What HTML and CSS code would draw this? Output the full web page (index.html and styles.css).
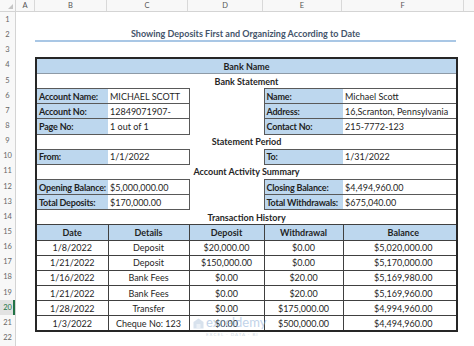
FILE: index.html
```html
<!DOCTYPE html>
<html lang="en">
<head>
    <meta charset="UTF-8">
    <meta name="viewport" content="width=device-width, initial-scale=1.0">
    <title>Showing Deposits First and Organizing According to Date</title>
    <link rel="stylesheet" href="styles.css">
</head>
<body>
    <div class="sheet">
        <div class="colbar">
            <div class="corner"><span class="tri"></span></div>
            <div class="colhead col-a">A</div>
            <div class="colhead col-b">B</div>
            <div class="colhead col-c">C</div>
            <div class="colhead col-d">D</div>
            <div class="colhead col-e">E</div>
            <div class="colhead col-f">F</div>
            <div class="colhead col-g"></div>
        </div>

        <div class="body">
            <div class="rownums">
                <div class="rn">1</div>
                <div class="rn">2</div>
                <div class="rn">3</div>
                <div class="rn">4</div>
                <div class="rn">5</div>
                <div class="rn">6</div>
                <div class="rn">7</div>
                <div class="rn">8</div>
                <div class="rn">9</div>
                <div class="rn">10</div>
                <div class="rn">11</div>
                <div class="rn">12</div>
                <div class="rn">13</div>
                <div class="rn">14</div>
                <div class="rn">15</div>
                <div class="rn">16</div>
                <div class="rn">17</div>
                <div class="rn">18</div>
                <div class="rn">19</div>
                <div class="rn active">20</div>
                <div class="rn">21</div>
                <div class="rn">22</div>
                <div class="rn"></div>
            </div>

            <div class="col-gap"></div>

            <div class="main">
                <div class="row"></div>
                <div class="title">Showing Deposits First and Organizing According to Date</div>
                <div class="row"></div>

                <table class="report">
                    <colgroup>
                        <col class="w-b"><col class="w-c"><col class="w-d"><col class="w-e"><col class="w-f">
                    </colgroup>
                    <tr><td colspan="5" class="band">Bank Name</td></tr>
                    <tr><td colspan="5" class="heading">Bank Statement</td></tr>

                    <tr class="box top">
                        <td class="lbl">Account Name:</td><td class="val end">MICHAEL SCOTT</td>
                        <td class="gap"></td>
                        <td class="lbl start">Name:</td><td class="val">Michael Scott</td>
                    </tr>
                    <tr class="box">
                        <td class="lbl">Account No:</td><td class="val end">12849071907-</td>
                        <td class="gap"></td>
                        <td class="lbl start">Address:</td><td class="val">16,Scranton, Pennsylvania</td>
                    </tr>
                    <tr class="box">
                        <td class="lbl">Page No:</td><td class="val end">1 out of 1</td>
                        <td class="gap"></td>
                        <td class="lbl start">Contact No:</td><td class="val">215-7772-123</td>
                    </tr>

                    <tr><td colspan="5" class="heading">Statement Period</td></tr>
                    <tr class="box top">
                        <td class="lbl">From:</td><td class="val end">1/1/2022</td>
                        <td class="gap"></td>
                        <td class="lbl start">To:</td><td class="val">1/31/2022</td>
                    </tr>

                    <tr><td colspan="5" class="heading">Account Activity Summary</td></tr>
                    <tr class="box top">
                        <td class="lbl">Opening Balance:</td><td class="val end">$5,000,000.00</td>
                        <td class="gap"></td>
                        <td class="lbl start">Closing Balance:</td><td class="val">$4,494,960.00</td>
                    </tr>
                    <tr class="box">
                        <td class="lbl">Total Deposits:</td><td class="val end">$170,000.00</td>
                        <td class="gap"></td>
                        <td class="lbl start">Total Withdrawals:</td><td class="val">$675,040.00</td>
                    </tr>

                    <tr><td colspan="5" class="heading">Transaction History</td></tr>
                    <tr class="thead">
                        <td>Date</td><td>Details</td><td>Deposit</td><td>Withdrawal</td><td class="bal">Balance</td>
                    </tr>
                    <tr class="trow">
                        <td>1/8/2022</td><td>Deposit</td><td>$20,000.00</td><td>$0.00</td><td class="bal">$5,020,000.00</td>
                    </tr>
                    <tr class="trow">
                        <td>1/21/2022</td><td>Deposit</td><td>$150,000.00</td><td>$0.00</td><td class="bal">$5,170,000.00</td>
                    </tr>
                    <tr class="trow">
                        <td>1/16/2022</td><td>Bank Fees</td><td>$0.00</td><td>$20.00</td><td class="bal">$5,169,980.00</td>
                    </tr>
                    <tr class="trow">
                        <td>1/21/2022</td><td>Bank Fees</td><td>$0.00</td><td>$20.00</td><td class="bal">$5,169,960.00</td>
                    </tr>
                    <tr class="trow">
                        <td>1/28/2022</td><td>Transfer</td><td>$0.00</td><td>$175,000.00</td><td class="bal">$4,994,960.00</td>
                    </tr>
                    <tr class="trow">
                        <td>1/3/2022</td><td>Cheque No: 123</td><td>$0.00</td><td>$500,000.00</td><td class="bal">$4,494,960.00</td>
                    </tr>
                </table>
            </div>
        </div>

        <div class="watermark">
            <svg class="wm-icon" width="11" height="11" viewBox="0 0 11 11">
                <path d="M5.5 0.5 L10.5 4 L10.5 10.5 L0.5 10.5 L0.5 4 Z" fill="#b9cbe0"/>
                <path d="M3.5 6 L7.5 6 L7.5 10.5 L3.5 10.5 Z" fill="#dbe5f0"/>
            </svg>
            <div class="wm-text">
                <span class="wm-name">exceldemy</span>
                <span class="wm-sub">EXCEL · DATA · BI</span>
            </div>
        </div>
    </div>
</body>
</html>
```

FILE: styles.css
```css
:root {
    --row: 15.15px;
}
body {
    margin: 0;
    background-color: #fff;
    font-family: 'Lato', 'Liberation Sans', sans-serif;
    color: #1f1f1f;
}
.sheet {
    position: relative;
    width: 474px;
    height: 346px;
    overflow: hidden;
    background-color: #fff;
}

/* column letters */
.colbar {
    display: flex;
    height: 11px;
    border-bottom: 1px solid #d4d4d4;
    background-color: #f8f8f8;
}
.corner {
    width: 15px;
    border-right: 1px solid #d4d4d4;
    position: relative;
}
.tri {
    position: absolute;
    right: 2px;
    bottom: 2px;
    width: 0;
    height: 0;
    border-left: 5px solid transparent;
    border-bottom: 5px solid #c4c4c4;
}
.colhead {
    border-right: 1px solid #d9d9d9;
    font-size: 7.5px;
    line-height: 11px;
    text-align: center;
    color: #555;
}
.col-a { width: 18px; }
.col-b { width: 71px; }
.col-c { width: 80px; }
.col-d { width: 74px; }
.col-e { width: 78px; }
.col-f { width: 121px; }
.col-g { flex: 1; border-right: none; }

/* row numbers */
.body {
    display: flex;
}
.rownums {
    width: 15px;
    border-right: 1px solid #d4d4d4;
    background-color: #f8f8f8;
}
.rn {
    height: var(--row);
    line-height: var(--row);
    font-size: 7.5px;
    text-align: center;
    color: #666;
}
.rn.active {
    color: #217346;
    background-color: #e2e2e2;
    box-shadow: inset -2px 0 0 #217346;
}
.col-gap {
    width: 19px;
}
.main {
    width: 421px;
}
.row {
    height: var(--row);
}
.title {
    height: calc(var(--row) - 2px);
    line-height: calc(var(--row) - 2px);
    border-bottom: 2px solid #a9c7e5;
    text-align: center;
    font-size: 9px;
    font-weight: 700;
    color: #44546a;
    white-space: nowrap;
}

/* report table */
.report {
    border-collapse: collapse;
    table-layout: fixed;
    width: 421px;
    border: 2px solid #262626;
    font-size: 9px;
}
.w-b { width: 72px; }
.w-c { width: 81px; }
.w-d { width: 75px; }
.w-e { width: 79px; }
.w-f { width: 114px; }
.report tr {
    height: var(--row);
}
.report td {
    padding: 0 2px;
    line-height: 11px;
    white-space: nowrap;
    overflow: hidden;
}
.band {
    background-color: #bdd7ee;
    font-weight: 700;
    text-align: center;
    border-bottom: 1px solid #8e9aa6;
}
.heading {
    font-weight: 700;
    text-align: center;
    color: #262626;
}
.box td {
    border-bottom: 1px solid #595959;
}
.box.top td {
    border-top: 1px solid #595959;
}
.box td.gap {
    border-top: none;
    border-bottom: none;
}
.lbl {
    background-color: #bdd7ee;
    font-weight: 700;
    letter-spacing: -0.2px;
}
.lbl.start {
    border-left: 1px solid #595959;
}
.val.end {
    border-right: 1px solid #595959;
}
.thead td,
.trow td {
    border: 1px solid #404040;
    text-align: center;
}
.thead td {
    background-color: #bdd7ee;
    font-weight: 700;
}
.report td.bal {
    padding-left: 9px;
}

/* watermark over the last row */
.watermark {
    position: absolute;
    left: 193px;
    top: 316px;
    display: flex;
    gap: 2px;
    opacity: 0.55;
}
.wm-icon {
    margin-top: 2px;
}
.wm-text {
    display: flex;
    flex-direction: column;
}
.wm-name {
    font-size: 13px;
    line-height: 13px;
    color: #8fb0d8;
}
.wm-sub {
    font-size: 4.5px;
    letter-spacing: 1px;
    color: #a8b8ca;
    margin-top: 3px;
}
```
